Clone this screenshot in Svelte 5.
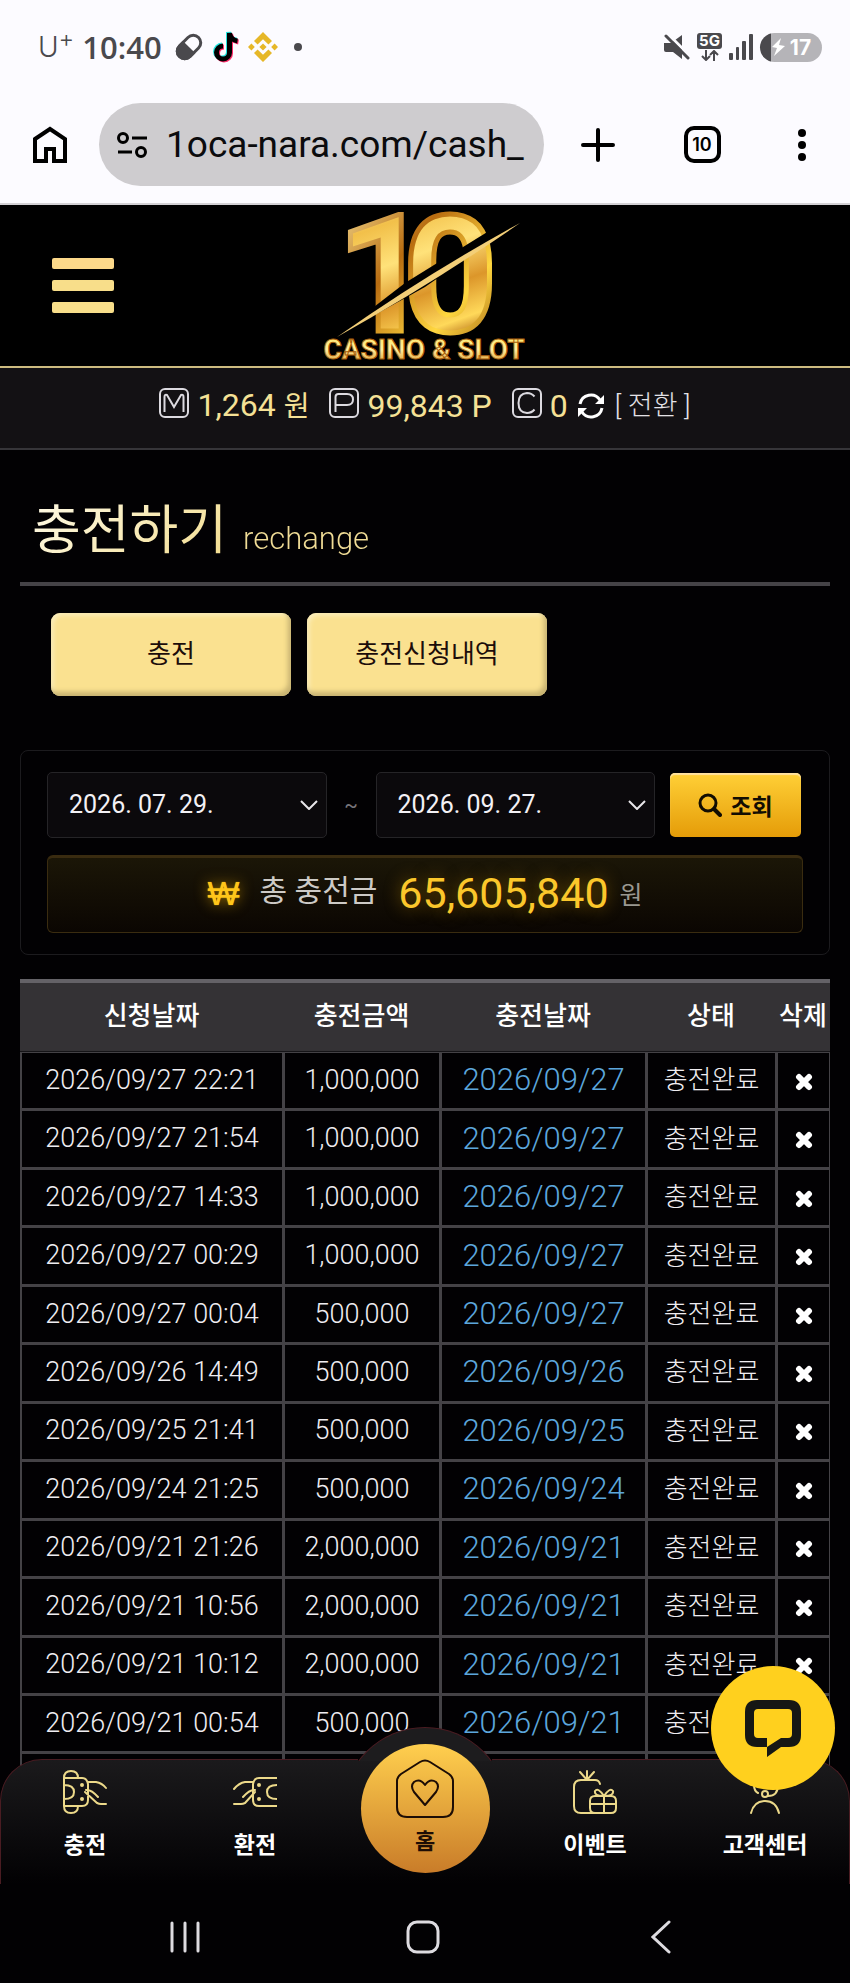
<script>
  const rows = [
    ['2026/09/27 22:21', '1,000,000', '2026/09/27'],
    ['2026/09/27 21:54', '1,000,000', '2026/09/27'],
    ['2026/09/27 14:33', '1,000,000', '2026/09/27'],
    ['2026/09/27 00:29', '1,000,000', '2026/09/27'],
    ['2026/09/27 00:04', '500,000', '2026/09/27'],
    ['2026/09/26 14:49', '500,000', '2026/09/26'],
    ['2026/09/25 21:41', '500,000', '2026/09/25'],
    ['2026/09/24 21:25', '500,000', '2026/09/24'],
    ['2026/09/21 21:26', '2,000,000', '2026/09/21'],
    ['2026/09/21 10:56', '2,000,000', '2026/09/21'],
    ['2026/09/21 10:12', '2,000,000', '2026/09/21'],
    ['2026/09/21 00:54', '500,000', '2026/09/21']
  ];
</script>

{#snippet badge(letter)}
  <svg class="badge" viewBox="0 0 30 30" aria-hidden="true">
    <rect x="1" y="1" width="28" height="28" rx="5" />
    {#if letter === 'M'}
      <path d="M5.500 24V9q0-3 2.500-2 L15 19 22 7q2.500-1 2.500 2v15" />
    {:else if letter === 'P'}
      <path d="M6.500 24V9q0-3 3-3H18q6 0 6 5.500T18 17H6.500" />
    {:else}
      <path d="M22.500 21.500q-3 3.500-7.500 3.500-8.500-.500-8.500-10T15 5q4.500 0 7.500 3.500" />
    {/if}
  </svg>
{/snippet}

<div class="screen">
  <div class="status">
    <div class="status-side">
      <span class="carrier">U<sup>+</sup></span>
      <span class="clock">10:40</span>
      <svg class="pill" viewBox="0 0 30 30" aria-hidden="true">
        <g transform="rotate(-45 15 15)">
          <rect x="1.500" y="7.500" width="27" height="15" rx="7.500" fill="none" stroke="#4a494d" stroke-width="3" />
          <path d="M15 6H9a9 9 0 0 0 0 18h6z" fill="#4a494d" />
        </g>
      </svg>
      <svg class="tiktok" viewBox="0 0 28 32" aria-hidden="true">
        <g fill="none" stroke-width="5">
          <g stroke="#25e5de" transform="translate(-1 -1)"><path d="M11 15a6.500 6.500 0 1 0 6.500 6.500V2q1 7 8 8" /></g>
          <g stroke="#fe2c6b" transform="translate(1 1)"><path d="M11 15a6.500 6.500 0 1 0 6.500 6.500V2q1 7 8 8" /></g>
          <path stroke="#000" d="M11 15a6.500 6.500 0 1 0 6.500 6.500V2q1 7 8 8" />
        </g>
      </svg>
      <svg class="binance" viewBox="0 0 30 30" fill="#e6b728" aria-hidden="true">
        <path d="M15 0l9 9-3.600 3.600L15 7.200l-5.400 5.400L6 9zM15 30l9-9-3.600-3.600-5.400 5.400-5.400-5.400L6 21zM15 11.400l3.600 3.600-3.600 3.600-3.600-3.600zM3.400 11.600L6.800 15l-3.400 3.400L0 15zM26.600 11.600L30 15l-3.400 3.400-3.400-3.400z" />
      </svg>
      <span class="more-dot"></span>
    </div>
    <div class="status-side right">
      <svg width="26" height="26" viewBox="0 0 26 26" aria-hidden="true">
        <path d="M0 9h7l11-8v24l-9-7H2q-2 0-2-2z" fill="#4a494d" />
        <path d="M4 0l24 24" stroke="#fcfbff" stroke-width="3" />
        <path d="M2 2l22 22" stroke="#4a494d" stroke-width="3" stroke-linecap="round" />
      </svg>
      <span class="network">
        <b>5G</b>
        <svg width="18" height="11" viewBox="0 0 18 11" fill="none" stroke="#4a494d" stroke-width="2" aria-hidden="true">
          <path d="M5 0v9M1 6l4 4 4-4M13 11V2M9 5l4-4 4 4" />
        </svg>
      </span>
      <svg width="24" height="26" viewBox="0 0 24 26" fill="#4a494d" aria-hidden="true">
        <rect x="0" y="19" width="4" height="7" rx="1" /><rect x="7" y="13" width="3" height="13" rx="1" />
        <rect x="13" y="7" width="4" height="19" rx="1" /><rect x="20" y="0" width="4" height="26" rx="1" />
      </svg>
      <span class="battery">
        <svg width="14" height="18" viewBox="0 0 14 18" fill="#fff" aria-hidden="true"><path d="M10 0L1 9l5 1-3 8L14 8 8 7z" /></svg>17
      </span>
    </div>
  </div>

  <div class="toolbar">
    <button class="tool home" aria-label="Home">
      <svg width="34" height="38" viewBox="0 0 34 38" fill="none" stroke="#000" stroke-width="4" aria-hidden="true">
        <path d="M2 13L17 3l15 10v22H21V23h-8v12H2z" />
      </svg>
    </button>
    <div class="address">
      <svg width="32" height="26" viewBox="0 0 32 26" fill="none" stroke="#000" stroke-width="3" aria-hidden="true">
        <circle cx="7" cy="6" r="4.500" /><path d="M16 6h15M2 20h14" /><circle cx="25" cy="20" r="4.500" />
      </svg>
      <input aria-label="URL" value="1oca-nara.com/cash_" />
    </div>
    <button class="tool" aria-label="New tab">
      <svg width="34" height="34" viewBox="0 0 34 34" stroke="#000" stroke-width="4" stroke-linecap="round" aria-hidden="true"><path d="M17 2v30M2 17h30" /></svg>
    </button>
    <button class="tool" aria-label="Tabs"><span class="tabs">10</span></button>
    <button class="tool last" aria-label="Menu">
      <svg width="10" height="34" viewBox="0 0 10 34" aria-hidden="true"><circle cx="5" cy="5" r="4" /><circle cx="5" cy="17" r="4" /><circle cx="5" cy="29" r="4" /></svg>
    </button>
  </div>

  <header>
    <button class="menu" aria-label="메뉴"><i></i><i></i><i></i></button>
    <svg class="logo" viewBox="0 0 220 158" role="img" aria-label="10 CASINO &amp; SLOT">
      <defs>
        <linearGradient id="gold" x1="0" y1="0" x2="0.300" y2="1">
          <stop offset="0" stop-color="#fff3b4" /><stop offset=".3" stop-color="#f2c04a" />
          <stop offset=".5" stop-color="#ffe27a" /><stop offset=".7" stop-color="#dc962a" />
          <stop offset=".88" stop-color="#ffd95a" /><stop offset="1" stop-color="#a85b0c" />
        </linearGradient>
        <linearGradient id="edge" x1="0" y1="0" x2="1" y2="1">
          <stop offset="0" stop-color="#fff0a8" /><stop offset=".4" stop-color="#b86c10" />
          <stop offset=".7" stop-color="#ffd740" /><stop offset="1" stop-color="#8b4608" />
        </linearGradient>
        <linearGradient id="letters" x1="0" y1="0" x2="0" y2="1">
          <stop offset="0" stop-color="#ffe65e" /><stop offset=".5" stop-color="#fff0a0" /><stop offset="1" stop-color="#d98a1c" />
        </linearGradient>
      </defs>
      <text class="digits" x="22 88" y="124" fill="url(#gold)" stroke="url(#edge)" stroke-width="5">10</text>
      <path d="M20 130L90 76 190 14l15 0L110 80z" fill="#000" />
      <path d="M22 130Q110 68 205 16 120 75 22 130z" fill="#f3cf78" />
      <text class="tagline" x="109" y="152" text-anchor="middle" fill="url(#letters)" stroke="#a85f0c" stroke-width="1">CASINO &amp; SLOT</text>
    </svg>
  </header>

  <section class="wallet">
    {@render badge('M')}<span class="value">1,264 <small>원</small></span>
    <span class="group">{@render badge('P')}</span><span class="value">99,843 P</span>
    <span class="group">{@render badge('C')}</span><span class="value">0</span>
    <button class="convert">
      <svg width="28" height="28" viewBox="0 0 28 28" aria-hidden="true">
        <g fill="none" stroke="#fff" stroke-width="3"><path d="M3 12A11 11 0 0 1 23 8M25 16A11 11 0 0 1 5 20" /></g>
        <path d="M27 3v9h-9zM1 25v-9h9z" fill="#fff" />
      </svg>
      [ 전환 ]
    </button>
  </section>

  <main>
    <div class="title"><h1>충전하기</h1><span>rechange</span></div>

    <div class="actions">
      <button>충전</button>
      <button>충전신청내역</button>
    </div>

    <form class="filter" onsubmit={(e) => e.preventDefault()}>
      <div class="range">
        <label class="date">
          <select aria-label="시작일"><option>2026. 07. 29.</option></select>
          <svg width="18" height="10" viewBox="0 0 18 10" aria-hidden="true"><path d="M1 1l8 8 8-8" /></svg>
        </label>
        <span class="tilde">~</span>
        <label class="date">
          <select aria-label="종료일"><option>2026. 09. 27.</option></select>
          <svg width="18" height="10" viewBox="0 0 18 10" aria-hidden="true"><path d="M1 1l8 8 8-8" /></svg>
        </label>
        <button class="search">
          <svg width="24" height="24" viewBox="0 0 24 24" fill="none" stroke="#120d02" aria-hidden="true">
            <circle cx="10" cy="10" r="8" stroke-width="3" /><path d="M16 16l6 6" stroke-width="4" stroke-linecap="round" />
          </svg>조회
        </button>
      </div>
      <div class="total">
        <span class="won">₩</span><span class="label">총 충전금</span><span class="sum">65,605,840</span><span class="unit">원</span>
      </div>
    </form>

    <table>
      <colgroup><col class="c1" /><col class="c2" /><col class="c3" /><col class="c4" /><col class="c5" /></colgroup>
      <thead>
        <tr><th>신청날짜</th><th>충전금액</th><th>충전날짜</th><th>상태</th><th>삭제</th></tr>
      </thead>
      <tbody>
        {#each rows as [requested, amount, charged]}
          <tr>
            <td>{requested}</td>
            <td>{amount}</td>
            <td class="charged">{charged}</td>
            <td class="state">충전완료</td>
            <td>
              <button class="remove" aria-label="삭제">
                <svg width="18" height="18" viewBox="0 0 18 18" aria-hidden="true"><path d="M4 4l10 10M14 4L4 14" stroke="#fff" stroke-width="6" stroke-linecap="round" /></svg>
              </button>
            </td>
          </tr>
        {/each}
        <tr><td></td><td></td><td></td><td></td><td></td></tr>
      </tbody>
    </table>
  </main>

  <div class="dock">
    <nav>
      <div class="hump"></div>
      <div class="plate"></div>
      <a href="#charge">
        <svg viewBox="0 0 44 44" aria-hidden="true">
          <path d="M1 8v28M1 8q0-7 7-7t7 7M1 36q0 7 7 7t7-7M1 8h18q5 0 6 6v16q0 6-6 6H1M1 15q10 0 10 7T1 29M25 12h8q6 1 10 6M23 20q5-1 12 7M22 22l12 11q2 1 4 1h5" />
          <circle cx="19" cy="15" r="1" /><circle cx="19" cy="29" r="1" />
        </svg>
        <span>충전</span>
      </a>
      <a href="#withdraw">
        <svg viewBox="0 0 44 44" aria-hidden="true">
          <path d="M44 8H26q-5 0-6 6v16q0 6 6 6h18M44 15q-10 0-10 7t10 7M20 12h-8q-6 1-11 7M22 20q-5-1-12 7M22 22L12 33q-2 1-4 1H1" />
          <circle cx="26" cy="15" r="1" /><circle cx="26" cy="29" r="1" />
        </svg>
        <span>환전</span>
      </a>
      <a class="center" href="#home">
        <svg viewBox="0 0 60 60" aria-hidden="true">
          <path d="M25 3q5-3 10 0l19 12q4 3 4 7v26q0 10-10 10H12Q2 58 2 48V22q0-4 4-7z" />
          <path d="M30 46L19 33q-4-6 0-10 6-4 11 3 5-7 11-3 4 4 0 10z" />
        </svg>
        <span>홈</span>
      </a>
      <a href="#event">
        <svg viewBox="0 0 44 44" aria-hidden="true">
          <path d="M14 1v9M7 2l7 8 7-8M10 10h9M27 14q-1-4-5-4H8q-7 0-7 7v19q0 7 7 7h30q5 0 5-5v-7q0-5-5-5H22q-5 0-5 5v7q0 5 5 5M31 26v17M17 34h26M31 26q-10 0-9-5 3-4 9 5 6-9 9-5 1 5-9 5" />
        </svg>
        <span>이벤트</span>
      </a>
      <a href="#support">
        <svg viewBox="0 0 44 44" aria-hidden="true">
          <path d="M8 43q3-12 14-12t14 12M11 15q0 6 4 8M35 15q0 11-10 11" /><circle cx="22" cy="24" r="3" />
        </svg>
        <span>고객센터</span>
      </a>
    </nav>
    <button class="chat" aria-label="상담">
      <svg viewBox="0 0 58 58" aria-hidden="true">
        <path fill="#161714" fill-rule="evenodd" d="M13 1h32q12 0 12 12v23q0 12-12 12h-8L23 58V48H13Q1 48 1 36V13Q1 1 13 1zm1 9q-4 0-4 4v21q0 4 4 4h9v9l14-9h7q4 0 4-4V14q0-4-4-4z" />
      </svg>
    </button>
    <div class="system">
      <button aria-label="Recents"><svg width="32" height="32" viewBox="0 0 32 32" aria-hidden="true"><path d="M3 2v28M16 2v28M29 2v28" /></svg></button>
      <button aria-label="Home"><svg width="34" height="34" viewBox="0 0 34 34" aria-hidden="true"><rect x="2" y="2" width="30" height="30" rx="9" /></svg></button>
      <button aria-label="Back"><svg width="20" height="34" viewBox="0 0 20 34" aria-hidden="true"><path d="M18 2L2 17l16 15" /></svg></button>
    </div>
  </div>
</div>

<style>
  :global(body) { background: #020103; }
  * { box-sizing: border-box; }
  button { border: 0; padding: 0; background: none; font: inherit; color: inherit; display: flex; align-items: center; justify-content: center; }
  .screen { position: relative; min-height: 100vh; overflow: hidden; background: #020103; color: #fff; font-family: Roboto, "Noto Sans CJK KR", sans-serif; }

  .status { height: 94px; padding: 0 28px 0 38px; display: flex; align-items: center; justify-content: space-between; background: #fcfbff; color: #4a494d; }
  .status-side { display: flex; align-items: center; gap: 8px; }
  .right { gap: 7px; }
  .carrier { font: 300 28px/32px Inter, sans-serif; }
  .carrier sup { font-size: 24px; line-height: 0; }
  .clock { font: 600 31px/32px "Open Sans", sans-serif; margin-right: 4px; }
  .pill { width: 30px; height: 30px; }
  .tiktok { width: 28px; height: 32px; }
  .binance { width: 30px; height: 30px; }
  .more-dot { width: 8px; height: 8px; margin-left: 8px; border-radius: 50%; background: #4a494d; }
  .network { display: flex; flex-direction: column; align-items: center; gap: 1px; }
  .network b { width: 25px; border-radius: 3px; background: #4a494d; color: #fff; font: 700 15px/16px Inter, sans-serif; text-align: center; }
  .battery { width: 62px; height: 29px; display: flex; align-items: center; justify-content: center; gap: 5px; border-radius: 15px; background: linear-gradient(90deg, #4a494d 11px, #b5b4b8 11px); color: #fff; font: 700 21px/29px Inter, sans-serif; }

  .toolbar { display: flex; align-items: center; padding: 9px 0 17px; background: #fcfbff; color: #000; border-bottom: 2px solid #d3d1d5; }
  .tool { width: 104px; height: 83px; flex: none; }
  .tool.home { width: 99px; }
  .tool.last { width: 96px; }
  .address { flex: 1; min-width: 0; height: 83px; display: flex; align-items: center; gap: 18px; margin-right: 2px; padding: 0 8px 0 17px; border-radius: 42px; background: #cecccf; }
  .address svg { flex: none; }
  .address input { flex: 1; min-width: 0; padding: 0; border: 0; background: none; font: 400 37px/44px Roboto, sans-serif; color: #0b0b0d; }
  .tabs { width: 37px; height: 37px; border: 4px solid #000; border-radius: 10px; font: 600 18px/29px Inter, sans-serif; }

  header { height: 163px; display: grid; grid-template-columns: 1fr auto 1fr; align-items: center; border-bottom: 2px solid #cdbb80; background: #000; }
  .menu { width: 62px; margin-left: 52px; flex-direction: column; gap: 11px; }
  .menu i { width: 62px; height: 11px; border-radius: 2px; background: #f8de8a; }
  .menu i:first-child { background: #fcd98a; }
  .logo { width: 220px; height: 158px; overflow: visible; }
  .digits { font: 700 164px Roboto, sans-serif; }
  .tagline { font: 700 28px Roboto, sans-serif; }

  .wallet { height: 82px; padding-bottom: 4px; display: flex; align-items: center; justify-content: center; border-bottom: 2px solid #363539; background: #131114; }
  .badge { width: 30px; height: 30px; margin-bottom: 6px; fill: none; stroke: #dcdae0; stroke-width: 2; display: block; }
  .group { margin-left: 20px; }
  .value { margin-left: 8px; font-size: 32px; line-height: 40px; color: #f5e196; }
  .value small { font-size: 28px; }
  .convert { gap: 10px; margin-left: 9px; font-size: 27px; line-height: 40px; font-weight: 300; color: #e4e2e6; }

  main { padding: 0 20px; }
  .title { height: 136px; padding: 43px 12px 0; display: flex; align-items: baseline; gap: 16px; border-bottom: 4px solid #454347; }
  .title h1, .title span { margin: 0; background: linear-gradient(135deg, #fffbe8, #f3dc8c); background-clip: text; color: transparent; }
  .title h1 { font-size: 53px; line-height: 76px; font-weight: 400; }
  .title span { font-size: 31px; line-height: 40px; font-weight: 300; background: #f0dc96; background-clip: text; }

  .actions { display: flex; gap: 16px; padding: 27px 31px 54px; }
  .actions button { width: 240px; height: 83px; padding-bottom: 6px; border-radius: 9px; background: #fae190; color: #1c0d0a; font-size: 26px; box-shadow: inset -3px -4px 5px #c7b271, inset 2px 2px 5px #fbf0c4; }

  .filter { padding: 21px 26px; border: 1px solid #1c1b1e; border-radius: 8px; }
  .range { display: flex; align-items: center; padding-right: 2px; }
  .date { flex: 1; min-width: 0; display: flex; align-items: center; height: 66px; padding-right: 8px; border: 1px solid #252427; border-radius: 5px; background: #0b090c; }
  .date select { flex: 1; min-width: 0; height: 64px; padding: 0 0 0 21px; border: 0; background: none; appearance: none; color: #f3f1f5; font: 400 25px/64px Roboto, sans-serif; }
  .date svg { fill: none; stroke: #e8e6ea; stroke-width: 2; }
  .tilde { width: 49px; text-align: center; color: #77757a; font-size: 20px; }
  .search { width: 131px; height: 64px; margin-left: 15px; gap: 8px; border-radius: 5px; background: linear-gradient(#ffd037, #e59c08); box-shadow: inset 0 2px 1px #ffe2a0; color: #120d02; font-size: 23px; font-weight: 700; }
  .total { height: 78px; margin-top: 17px; padding-bottom: 4px; display: flex; align-items: center; justify-content: center; border: 1px solid #3a2c10; border-top: 3px solid #392b10; border-radius: 6px; background: linear-gradient(#1b1607, #0b0602); }
  .won { color: #ffc61a; font-family: "Liberation Sans", sans-serif; font-size: 34px; line-height: 40px; text-shadow: 0 0 1px #ffc61a, 0 0 14px #a57800; }
  .label { margin-left: 20px; font-size: 30px; line-height: 40px; margin-bottom: 4px; color: #cdcac6; }
  .sum { margin-left: 21px; font-size: 43px; line-height: 60px; color: #fbc72b; text-shadow: 0 0 16px #7a5800; }
  .unit { margin-left: 11px; font-size: 25px; color: #9a9890; }

  table { width: 100%; height: 833px; margin-top: 24px; border-spacing: 0; table-layout: fixed; text-align: center; }
  .c1 { width: 263px; } .c2 { width: 157px; } .c3 { width: 206px; } .c4 { width: 130px; } .c5 { width: 54px; }
  th { height: 73px; padding: 0 0 8px; border-top: 4px solid #646267; border-bottom: 1px solid #151417; background: #343235; font-size: 26px; font-weight: 500; white-space: nowrap; }
  td { height: 58px; padding: 0 0 2px; border-style: solid; border-color: #444246; border-width: 1px 1px 2px 2px; font-size: 27px; font-weight: 300; color: #efedf1; white-space: nowrap; }
  td.charged { font-size: 31px; color: #5ca6dc; }
  td.state { padding-bottom: 6px; font-size: 26px; }
  .remove { width: 100%; padding-top: 4px; }

  .dock { position: absolute; left: 0; right: 0; bottom: 0; }
  nav { position: relative; height: 125px; display: grid; grid-template-columns: repeat(5, 1fr); }
  .plate { position: absolute; inset: 0; border-radius: 42px 42px 0 0; border: solid #4a1c22; border-width: 1px 1px 0; background: linear-gradient(#1b1a1c, #020103); clip-path: polygon(0 0, calc(50% - 67px) 0, calc(50% - 67px) 2px, calc(50% + 67px) 2px, calc(50% + 67px) 0, 100% 0, 100% 100%, 0 100%); }
  .hump { position: absolute; left: calc(50% - 83px); top: -32px; width: 166px; height: 100px; border: 1px solid #4a1c22; border-bottom: 0; border-radius: 83px 83px 0 0; background: #1d1c1e; }
  nav a { position: relative; display: flex; flex-direction: column; align-items: center; padding-top: 11px; color: #fff; font-size: 23px; line-height: 32px; font-weight: 700; text-decoration: none; }
  nav a svg { width: 44px; height: 44px; margin-bottom: 16px; fill: none; stroke: #ecd98a; stroke-width: 2; stroke-linecap: round; stroke-linejoin: round; }
  nav a.center { justify-self: center; width: 129px; height: 129px; margin-top: -15px; padding-top: 15px; border-radius: 50%; background: linear-gradient(#ffcf4e, #c97c29); color: #1d0d05; font-size: 22px; }
  nav a.center svg { width: 60px; height: 60px; margin-bottom: 7px; stroke: #1d0d05; }
  .chat { position: absolute; right: 15px; top: -93px; width: 124px; height: 124px; border-radius: 50%; background: #ffd01e; }
  .chat svg { width: 58px; height: 58px; }
  .system { height: 99px; padding: 6px 70px 0 66px; display: grid; grid-template-columns: repeat(3, 1fr); background: #020103; }
  .system svg { fill: none; stroke: #dddbe0; stroke-width: 3; stroke-linecap: round; }
</style>
